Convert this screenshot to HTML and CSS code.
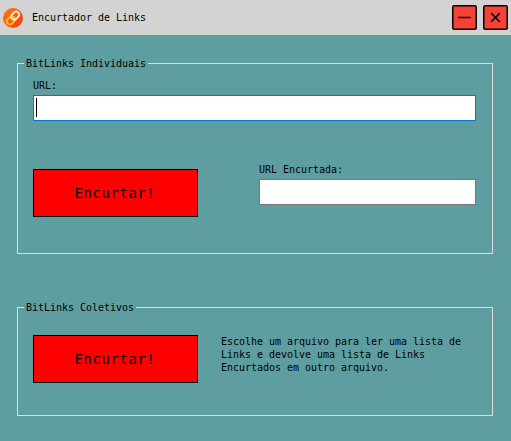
FILE: index.html
```html
<!DOCTYPE html>
<html lang="pt-BR">
<head>
<meta charset="utf-8">
<title>Encurtador de Links</title>
<link rel="stylesheet" href="styles.css">
</head>
<body>
<header class="titlebar">
  <svg class="logo" width="20" height="20" viewBox="0 0 20 20" aria-hidden="true">
    <defs><linearGradient id="disc" x1="0" y1="0" x2="1" y2="1"><stop offset="0" stop-color="#ff7a1c"/><stop offset="1" stop-color="#f03c0b"/></linearGradient></defs>
    <circle cx="10" cy="10" r="10" fill="url(#disc)"/>
    <g transform="rotate(-48 10 10)" fill="none" stroke-width="1.8">
      <rect x="2.4" y="7" width="8.8" height="6" rx="3" stroke="#ffc61a"/>
      <rect x="8.8" y="7" width="8.8" height="6" rx="3" stroke="#fff2dc"/>
    </g>
  </svg>
  <h1 class="title">Encurtador de Links</h1>
  <button class="control" type="button" aria-label="Minimizar">
    <svg width="25" height="25" viewBox="0 0 25 25"><rect class="face" x=".75" y=".75" width="23.5" height="23.5" rx="1.5"/><path class="mark" d="M6.7 12.5h11.6"/></svg>
  </button>
  <button class="control" type="button" aria-label="Fechar">
    <svg width="25" height="25" viewBox="0 0 25 25"><rect class="face" x=".75" y=".75" width="23.5" height="23.5" rx="1.5"/><path class="mark" d="M8.5 8.5l8 8M16.5 8.5l-8 8"/></svg>
  </button>
</header>
<main class="content">
  <fieldset class="group single">
    <legend>BitLinks Individuais</legend>
    <label class="field">URL:
      <span class="input focused"><span class="caret"></span></span>
    </label>
    <div class="row">
      <button class="action" type="button">Encurtar!</button>
      <label class="field result">URL Encurtada:
        <span class="input"></span>
      </label>
    </div>
  </fieldset>
  <fieldset class="group batch">
    <legend>BitLinks Coletivos</legend>
    <div class="row">
      <button class="action" type="button">Encurtar!</button>
      <p class="description">Escolhe um arquivo para ler uma lista de Links e devolve uma lista de Links Encurtados em outro arquivo.</p>
    </div>
  </fieldset>
</main>
</body>
</html>
```
FILE: styles.css
```css
* {
  box-sizing: border-box;
}

body {
  margin: 0;
  height: 441px;
  overflow: hidden;
  background: #5f9ea0;
  color: #000;
  font: 10px/13px "DejaVu Sans Mono", monospace;
  letter-spacing: -0.02px;
}

.titlebar {
  display: flex;
  align-items: center;
  gap: 6px;
  height: 35px;
  padding: 0 3px;
  background: #d3d3d3;
}

.logo {
  flex: none;
  margin-right: 3px;
}

.title {
  flex: 1;
  margin: 0;
  font: inherit;
}

.control {
  width: 25px;
  height: 25px;
  padding: 0;
  border: 0;
  background: none;
}

.control svg {
  display: block;
}

.face {
  fill: #f44336;
  stroke: #000;
  stroke-width: 1.5;
}

.mark {
  fill: none;
  stroke: #000;
  stroke-width: 1.6;
  stroke-linecap: round;
}

.content {
  padding: 22px 18px 0 17px;
}

.group {
  min-width: 0;
  margin: 0;
  padding: 9px 16px 0 15px;
  border: 1px solid #dcdcdc;
}

.group legend {
  margin-left: -9px;
  padding: 0 2px;
}

.single {
  height: 197px;
}

.batch {
  height: 115px;
  margin-top: 47px;
  padding-top: 21px;
}

.field {
  display: block;
}

.input {
  display: block;
  height: 26px;
  margin-top: 3px;
  padding: 2px;
  border: 1px solid #7a7a7a;
  background: #fff;
}

.focused {
  border-color: #0078d7;
}

.caret {
  display: block;
  width: 1px;
  height: 19px;
  background: #000;
}

.row {
  display: flex;
}

.single .row {
  align-items: flex-start;
  margin-top: 42px;
}

.single .action {
  margin-top: 6px;
}

.action {
  flex: none;
  width: 165px;
  height: 48px;
  padding: 0 1px 1px 0;
  border: 1px solid #000;
  background: #f00;
  color: #000;
  font: 14px/20px "DejaVu Sans Mono", monospace;
  letter-spacing: 0.57px;
}

.result {
  flex: 1;
  margin-left: 61px;
}

.description {
  width: 246px;
  margin: 0 0 0 23px;
}
```
